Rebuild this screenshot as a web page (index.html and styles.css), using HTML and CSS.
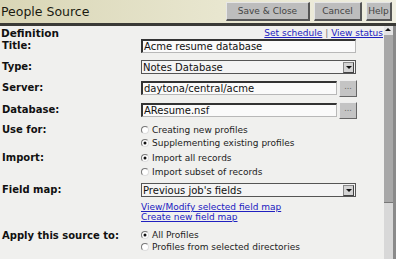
FILE: index.html
```html
<!DOCTYPE html>
<html>
<head>
<meta charset="utf-8">
<link rel="stylesheet" href="styles.css">
</head>
<body>
<div class="header">
  <div class="title">People Source</div>
  <div class="buttons">
    <button class="btn b-save">Save &amp; Close</button>
    <button class="btn b-cancel">Cancel</button>
    <button class="btn b-help">Help</button>
  </div>
</div>
<div class="rule"></div>
<div class="main">
  <div class="content">
    <div class="section">
      <div class="sec-title">Definition</div>
      <div class="sec-links"><a href="#">Set schedule</a> <span class="sep">|</span> <a href="#">View status</a></div>
    </div>
    <div class="row r-title">
      <div class="label">Title:</div>
      <div class="field"><div class="input wide">Acme resume database</div></div>
    </div>
    <div class="row r-type">
      <div class="label">Type:</div>
      <div class="field"><div class="select wide"><span>Notes Database</span><span class="arrow"></span></div></div>
    </div>
    <div class="row r-server">
      <div class="label">Server:</div>
      <div class="field"><div class="input narrow">daytona/central/acme</div><div class="dots">...</div></div>
    </div>
    <div class="row r-db">
      <div class="label">Database:</div>
      <div class="field"><div class="input narrow">AResume.nsf</div><div class="dots">...</div></div>
    </div>
    <div class="row r-use">
      <div class="label">Use for:</div>
      <div class="field col">
        <div class="radio"><span class="rb"></span>Creating new profiles</div>
        <div class="radio"><span class="rb on"></span>Supplementing existing profiles</div>
      </div>
    </div>
    <div class="row r-import">
      <div class="label">Import:</div>
      <div class="field col">
        <div class="radio"><span class="rb on"></span>Import all records</div>
        <div class="radio"><span class="rb"></span>Import subset of records</div>
      </div>
    </div>
    <div class="row r-map">
      <div class="label">Field map:</div>
      <div class="field col">
        <div class="select wide"><span>Previous job's fields</span><span class="arrow"></span></div>
        <div class="links"><a href="#">View/Modify selected field map</a><a href="#">Create new field map</a></div>
      </div>
    </div>
    <div class="row r-apply">
      <div class="label">Apply this source to:</div>
      <div class="field col">
        <div class="radio"><span class="rb on"></span>All Profiles</div>
        <div class="radio"><span class="rb"></span>Profiles from selected directories</div>
      </div>
    </div>
  </div>
  <div class="scrollbar">
    <div class="sb-up"></div>
    <div class="sb-thumb"></div>
    <div class="sb-track"></div>
  </div>
</div>
</body>
</html>
```
FILE: styles.css
```css
* { box-sizing: border-box; }
html, body { margin: 0; padding: 0; }
body {
  width: 396px; height: 259px; overflow: hidden;
  font-family: "DejaVu Sans", Verdana, sans-serif;
  background: #f0f0ee;
  color: #000;
}
.header {
  height: 23px;
  display: flex; align-items: center; justify-content: space-between;
  background: linear-gradient(to right, #d9d6b6, #e8e6cf 55%, #efeee0);
  padding: 0 4px 0 1px;
}
.title { font-size: 12.5px; color: #1a1a10; }
.buttons { display: flex; gap: 4px; }
.btn {
  font-family: "DejaVu Sans", Verdana, sans-serif;
  font-size: 9px; color: #444;
  height: 19px; padding: 0;
  background: #bdbdbd;
  border: 1px solid #888;
  border-top-color: #e6e6e6; border-left-color: #e6e6e6;
  border-right: 2px solid #555; border-bottom: 2px solid #555;
}
.b-save { width: 84px; }
.b-cancel { width: 48px; }
.b-help { width: 26px; }
.rule { height: 3px; background: #3a3a36; }
.main { display: flex; height: 233px; }
.content { flex: 1; padding: 0 0 0 1px; }
.section { display: flex; justify-content: space-between; align-items: center; height: 13px; padding-top: 1px; }
.sec-title { font-weight: bold; font-size: 10.5px; color: #111; }
.sec-links { font-size: 9px; padding-right: 1px; }
a { color: #2020c0; text-decoration: underline; }
.sep { color: #777; }
.row { display: flex; }
.label { width: 140px; font-weight: bold; font-size: 10px; color: #111; padding-left: 1px; line-height: 14px; }
.field { display: flex; gap: 2px; }
.field.col { flex-direction: column; gap: 0; }
.input, .select {
  height: 14px; background: #fafafa;
  border: 1px solid #b8b8b8; border-top: 2px solid #333; border-left: 2px solid #333;
  font-size: 10px; line-height: 11px; padding-left: 1px; color: #111;
  white-space: nowrap; overflow: hidden;
}
.wide { width: 215px; }
.narrow { width: 196px; }
.select { display: flex; justify-content: space-between; align-items: center; border: 1px solid #555; background: #f4f4f4; }
.arrow {
  width: 11px; height: 11px; background: #d4d4d4; border: 1px solid #888;
  border-right-color: #444; border-bottom-color: #444;
  position: relative; margin-right: 1px;
}
.arrow::after {
  content: ""; position: absolute; left: 2px; top: 3px;
  border-left: 3px solid transparent; border-right: 3px solid transparent; border-top: 3px solid #111;
}
.dots {
  width: 18px; height: 17px; margin-top: -1px;
  background: #c4c4c4; border: 1px solid #eee; border-right: 1px solid #666; border-bottom: 1px solid #666;
  font-size: 8px; color: #666; text-align: center; line-height: 12px;
}
.r-title, .r-type, .r-server, .r-db { height: 21px; }
.r-db { margin-top: 1px; height: 20px; }
.radio { display: flex; align-items: center; height: 13px; font-size: 9px; color: #222; }
.rb {
  width: 8px; height: 8px; border-radius: 50%;
  border: 1px solid #777; border-right-color: #ddd; border-bottom-color: #ddd;
  background: #fff; margin-right: 3px; position: relative;
}
.rb.on::after { content: ""; position: absolute; left: 2px; top: 2px; width: 2px; height: 2px; border-radius: 50%; background: #111; box-shadow: 0 0 0 0.5px #111; }
.r-use .label, .r-import .label, .r-apply .label { line-height: 13px; }
.r-import { margin-top: 2px; }
.r-import .radio { height: 14px; }
.r-map { margin-top: 4px; }
.links { display: flex; flex-direction: column; margin-top: 5px; line-height: 10px; font-size: 9px; }
.r-apply { margin-top: 7px; }
.r-apply .radio { height: 12px; }
.scrollbar { width: 12px; display: flex; flex-direction: column; background: #d4d4d4; border-right: 3px solid #8a8a8a; }
.sb-up { height: 9px; background: #e4e4e4; position: relative; }
.sb-up::after { content: ""; position: absolute; left: 1px; top: 2px; border-left: 3px solid transparent; border-right: 3px solid transparent; border-bottom: 3px solid #111; }
.sb-thumb { height: 168px; background: #a8a8a8; border-bottom: 1px solid #777; }
.sb-track { flex: 1; background: #d8d8d8; }
```
